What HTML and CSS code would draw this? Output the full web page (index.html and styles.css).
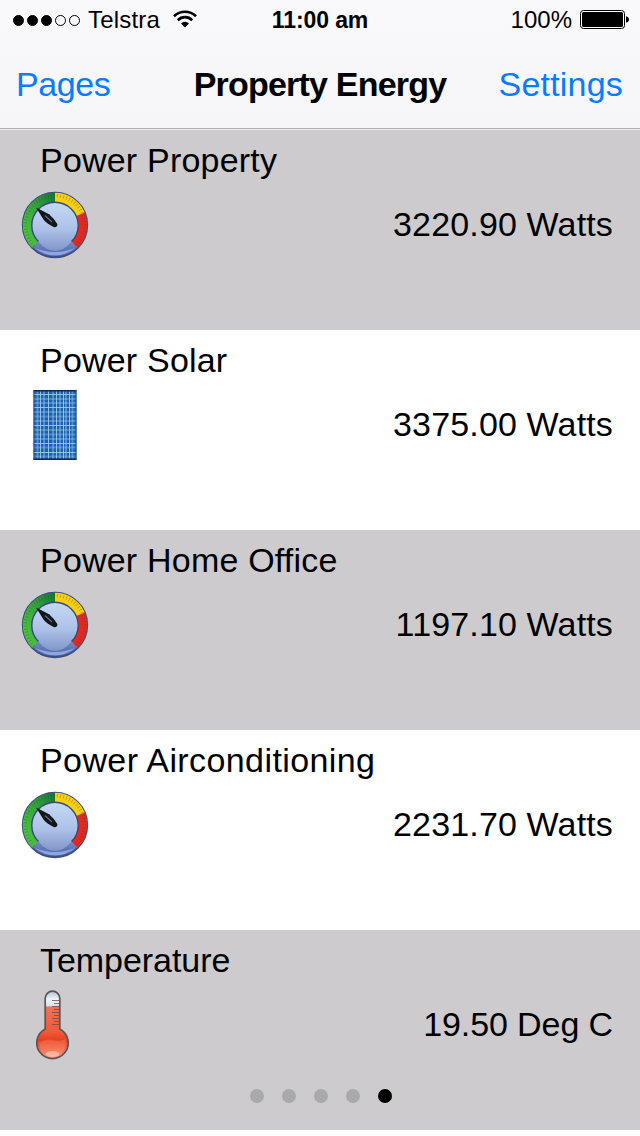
FILE: index.html
```
<!DOCTYPE html>
<html lang="en">
<head>
    <meta charset="UTF-8">
    <meta name="viewport" content="width=device-width, initial-scale=1.0">
    <title>Property Energy</title>
    <link rel="stylesheet" href="styles.css">
</head>
<body>
    <!-- shared icon shapes -->
    <svg class="defs" width="0" height="0">
        <defs>
            <linearGradient id="face" x1="0" y1="0" x2="0" y2="1">
                <stop offset="0" stop-color="#c4d8f4"/>
                <stop offset="0.55" stop-color="#adc2e7"/>
                <stop offset="1" stop-color="#7f95c9"/>
            </linearGradient>
            <linearGradient id="rim" x1="0" y1="0" x2="0" y2="1">
                <stop offset="0.7" stop-color="#7d92c8"/>
                <stop offset="0.93" stop-color="#556cb2"/>
                <stop offset="1" stop-color="#3b4c96"/>
            </linearGradient>
            <linearGradient id="green" x1="0" y1="1" x2="1" y2="0">
                <stop offset="0" stop-color="#4fc442"/>
                <stop offset="0.5" stop-color="#35a93a"/>
                <stop offset="1" stop-color="#16793a"/>
            </linearGradient>
            <symbol id="gauge" viewBox="0 0 70 70">
                <circle cx="35" cy="35" r="32.4" fill="url(#rim)" stroke="#3c4f80" stroke-width="1.6"/>
                <g fill="none" stroke-width="9.4">
                    <path d="M15.6 54.4A27.5 27.5 0 0 1 35 7.5" stroke="url(#green)"/>
                    <path d="M35 7.5A27.5 27.5 0 0 1 60.4 24.4" stroke="#f8cf13"/>
                    <path d="M60.4 24.4A27.5 27.5 0 0 1 54.4 54.4" stroke="#e42a20"/>
                </g>
                <path d="M14.1 55.9A29.5 29.5 0 1 1 55.9 55.9" fill="none" stroke="#40401c" stroke-opacity=".35" stroke-width="3.5" stroke-dasharray="0.8 2.3"/>
                <path d="M18.4 51.6A23.2 23.2 0 1 1 51.6 51.6Q44 61 35 61Q26 61 18.4 51.6Z" fill="url(#face)"/>
                <path d="M18.4 51.6A23.2 23.2 0 1 1 51.6 51.6" fill="none" stroke="#344a78" stroke-width="1.4"/>
                <path d="M15 58Q35 66 55 58Q46 65.500 35 65.500Q24 65.500 15 58Z" fill="#8fa5dd"/>
                <path d="M16 17.500L29 24.3Q33.5 28 37.3 34A2.6 2.6 0 0 1 34 37.2Q26.5 33.5 23.5 29.5Z" fill="#11151c"/>
                <path d="M25 25.5L32 32" stroke="#66717d" stroke-width="1.2"/>
            </symbol>
        </defs>
    </svg>

    <div class="phone">
        <header class="header">
            <div class="status">
                <div class="carrier">
                    <div class="signal"><i class="on"></i><i class="on"></i><i class="on"></i><i></i><i></i></div>
                    <span class="network">Telstra</span>
                    <svg class="wifi" width="24" height="18" viewBox="0 0 24 18">
                        <g fill="none" stroke="#000" stroke-width="2.7">
                            <path d="M1 6.2A15.8 15.8 0 0 1 23 6.2"/>
                            <path d="M4.8 10.2A10.2 10.2 0 0 1 19.2 10.2"/>
                        </g>
                        <path d="M12 17.5L8 13.500A5.600 5.600 0 0 1 16 13.500Z"/>
                    </svg>
                </div>
                <div class="time">11:00 am</div>
                <div class="power">
                    <span>100%</span>
                    <svg width="50" height="20" viewBox="0 0 50 20">
                        <rect x="0.5" y="0.5" width="44" height="18" rx="3" fill="#fff" stroke="#000"/>
                        <rect x="2" y="2" width="41" height="15" rx="1.5"/>
                        <path d="M46 6.2Q49 7 49 9.5Q49 12 46 12.8Z"/>
                    </svg>
                </div>
            </div>
            <nav class="navbar">
                <a class="pages">Pages</a>
                <h1>Property Energy</h1>
                <a class="settings">Settings</a>
            </nav>
        </header>

        <main class="list">
            <section class="row">
                <h2 class="property">Power Property</h2>
                <div class="reading">
                    <svg class="icon"><use href="#gauge"/></svg>
                    <span class="value">3220.90 Watts</span>
                </div>
            </section>
            <section class="row">
                <h2 class="solar">Power Solar</h2>
                <div class="reading">
                    <svg class="icon" viewBox="0 0 70 70">
                        <rect x="13.500" y="0" width="43" height="70" fill="#1d5fb0"/>
                        <g fill="none" stroke="#9fd0f6">
                            <path d="M17.500 1v68M24 1v68M33 1v68M40 1v68M46 1v68M52.500 1v68" stroke-width="2" stroke-opacity=".4"/>
                            <path d="M13 9h44M13 13h44M13 22h44M13 26.500h44M13 31h44M13 40h44M13 44.500h44M13 49h44M13 57.500h44M13 66.500h44" stroke-width="2" stroke-opacity=".35"/>
                            <path d="M20.500 1v68M28.500 1v68M36.500 1v68M43.500 1v68M49.500 1v68" stroke-opacity=".85"/>
                            <path d="M13 4.500h44M13 17.500h44M13 35.500h44M13 53.500h44M13 62.500h44" stroke-opacity=".85"/>
                        </g>
                        <path d="M13.500 0.8h43M13.500 69.2h43" stroke="#10284a" stroke-width="1.600"/>
                        <path d="M14 0v70M56 0v70" stroke="#2b568c"/>
                    </svg>
                    <span class="value">3375.00 Watts</span>
                </div>
            </section>
            <section class="row">
                <h2 class="office">Power Home Office</h2>
                <div class="reading">
                    <svg class="icon"><use href="#gauge"/></svg>
                    <span class="value">1197.10 Watts</span>
                </div>
            </section>
            <section class="row">
                <h2 class="aircon">Power Airconditioning</h2>
                <div class="reading">
                    <svg class="icon"><use href="#gauge"/></svg>
                    <span class="value">2231.70 Watts</span>
                </div>
            </section>
            <section class="row">
                <h2 class="temp">Temperature</h2>
                <div class="reading">
                    <svg class="icon" viewBox="0 0 70 70">
                        <defs>
                            <linearGradient id="glass" x1="0" y1="0" x2="0" y2="1">
                                <stop offset="0" stop-color="#b5bfd2"/>
                                <stop offset="0.12" stop-color="#edf3ff"/>
                                <stop offset="0.21" stop-color="#dce5f6"/>
                                <stop offset="0.24" stop-color="#ea735b"/>
                                <stop offset="0.6" stop-color="#f4583a"/>
                                <stop offset="0.73" stop-color="#e5421f"/>
                                <stop offset="1" stop-color="#ff9b80"/>
                            </linearGradient>
                        </defs>
                        <path d="M25.2 39V8.5A7.3 7.3 0 0 1 39.8 8.5V39A15.7 15.7 0 1 1 25.2 39Z" fill="url(#glass)" stroke="#5b5558" stroke-width="1.7"/>
                        <path d="M32 10.5h7M34 13.5h5M32 16.5h7M34 19.5h5M32 22.5h7M34 25.5h5M32 28.5h7M34 31.5h5M32 34.5h7" stroke="#6e4844" stroke-opacity=".75"/>
                        <path d="M19 53Q26 48 33 50Q41 52 46 49Q45 66 32.5 66Q22 66 19 53Z" fill="#ff8a6d" fill-opacity=".35"/>
                        <ellipse cx="32.5" cy="64" rx="7" ry="3" fill="#ffd2c3" fill-opacity=".6"/>
                    </svg>
                    <span class="value degrees">19.50 Deg C</span>
                </div>
                <div class="pager"><i></i><i></i><i></i><i></i><i class="current"></i></div>
            </section>
        </main>
    </div>
</body>
</html>
```
FILE: styles.css
```
* {
    box-sizing: border-box;
}
body {
    margin: 0;
    background-color: #fff;
    font-family: "Liberation Sans", Arial, sans-serif;
    color: #000;
}
.defs {
    display: block;
}
.phone {
    width: 640px;
}
.header {
    height: 130px;
    background: linear-gradient(#f9f8fb, #f6f5f7);
    border-bottom: 1px solid #eeedf0;
    box-shadow: inset 0 -1px #b0afb3;
}
.status {
    height: 40px;
    display: grid;
    grid-template-columns: 220px 200px 220px;
    align-items: center;
    font-size: 24px;
    line-height: 40px;
}
.carrier {
    display: flex;
    align-items: center;
    padding-left: 13px;
}
.signal {
    display: flex;
    gap: 3px;
}
.signal i {
    width: 11px;
    height: 11px;
    border: 1px solid #000;
    border-radius: 50%;
}
.signal .on {
    background-color: #000;
}
.network {
    margin-left: 8px;
    width: 85px;
    letter-spacing: 0.2px;
}
.wifi {
    margin-top: -2px;
}
.time {
    text-align: center;
    font-weight: bold;
    font-size: 23px;
    letter-spacing: -0.1px;
}
.power {
    display: flex;
    justify-content: flex-end;
    align-items: center;
    padding-right: 10px;
    gap: 8px;
}
.navbar {
    height: 88px;
    display: grid;
    grid-template-columns: 150px 1fr 150px;
    font-size: 34px;
    line-height: 88px;
}
.navbar a {
    color: #087cff;
}
.navbar h1 {
    margin: 0;
    font-size: 34px;
    letter-spacing: -0.8px;
    text-align: center;
}
.navbar .pages {
    padding-left: 16px;
    letter-spacing: -0.4px;
}
.navbar .settings {
    padding-right: 17px;
    text-align: right;
    letter-spacing: 0.2px;
}
.row {
    height: 200px;
    padding-top: 9px;
    background-color: #cdcbce;
}
.row:nth-child(even) {
    background-color: #fff;
}
.row h2 {
    margin: 0 0 0 40px;
    font-size: 34px;
    font-weight: normal;
    line-height: 42px;
    letter-spacing: 0.2px;
}
.row .aircon {
    letter-spacing: 0.4px;
}
.row .temp {
    letter-spacing: -0.05px;
}
.reading {
    height: 70px;
    margin-top: 9px;
    padding: 0 27px 0 20px;
    display: flex;
    justify-content: space-between;
    align-items: center;
}
.icon {
    width: 70px;
    height: 70px;
}
.value {
    font-size: 34px;
    line-height: 40px;
    letter-spacing: 0.15px;
    padding-bottom: 2px;
}
.degrees {
    letter-spacing: -0.1px;
}
.pager {
    display: flex;
    justify-content: center;
    gap: 18px;
    margin-top: 29px;
    padding-left: 2px;
}
.pager i {
    width: 14px;
    height: 14px;
    border-radius: 50%;
    background-color: #a9a8ab;
}
.pager .current {
    background-color: #000;
}
```
